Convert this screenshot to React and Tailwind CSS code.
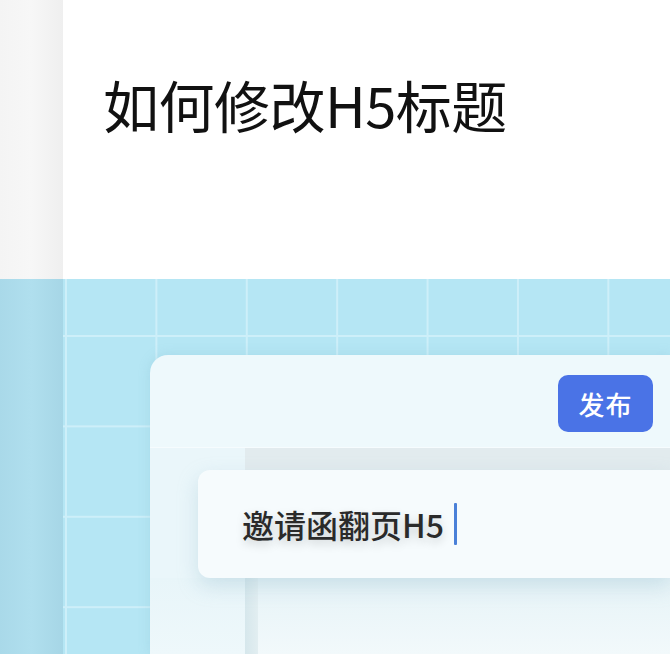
export default function App() {
  return (
    <div className="w-[670px] h-[654px] overflow-hidden flex flex-col bg-white font-['Noto_Sans_CJK_SC','Noto_Sans',sans-serif]">
      {/* top white area */}
      <div className="h-[279px] flex shrink-0">
        <div className="w-[63px] bg-gradient-to-r from-[#f4f4f4] via-[#f7f7f7] to-[#efefef]" />
        <div className="flex-1 pl-[40px] pt-[68px]">
          <h1 className="text-[56px] leading-[72px] text-[#111] font-normal tracking-[-0.5px]">如何修改H5标题</h1>
        </div>
      </div>

      {/* blue grid area */}
      <div className="flex-1 flex min-h-0">
        <div className="w-[63px] bg-gradient-to-r from-[#a9d9e9] via-[#b0dfee] to-[#a6d6e6]" />
        <div className="flex-1 flex flex-col pl-[87px] pt-[76px] bg-[#b5e6f4] bg-[image:linear-gradient(to_right,#cdeff9_2px,transparent_2px),linear-gradient(to_bottom,#cdeff9_2px,transparent_2px)] bg-[size:90.4px_90.4px] bg-[position:2px_56px]">
          <div className="flex-1 flex flex-col rounded-tl-[18px] bg-[#eef9fc] shadow-[0_0_12px_rgba(120,180,200,0.25)]">
            {/* header */}
            <div className="h-[93px] flex items-center justify-end pr-[17px] border-b border-[#f6fcfe]">
              <button className="w-[95px] h-[57px] mt-[4px] rounded-[10px] bg-[#4a73e6] text-white text-[26px] font-medium tracking-[1px]">
                发布
              </button>
            </div>

            {/* body */}
            <div className="flex-1 flex flex-col bg-[#eaf6fa]">
              <div className="h-[22px] flex">
                <div className="w-[95px]" />
                <div className="flex-1 bg-[#e2ebee]" />
              </div>
              <div className="ml-[48px] h-[108px] rounded-l-[12px] bg-[#f6fbfd] shadow-[0_8px_20px_rgba(150,190,205,0.35)] flex items-center pl-[44px] relative z-10">
                <span className="text-[32px] font-medium text-[#2a2a2a] [text-shadow:0_4px_10px_rgba(0,0,0,0.18)]">
                  邀请函翻页H5
                </span>
                <span className="ml-[10px] w-[3px] h-[42px] bg-[#4a80d8] rounded-[1px]" />
              </div>
              <div className="flex-1 flex">
                <div className="w-[95px] bg-gradient-to-b from-[#e8f5f9] to-[#eef8fb]" />
                <div className="w-[13px] bg-gradient-to-r from-[#d6e7ec] to-[#e2eef1]" />
                <div className="flex-1 bg-gradient-to-b from-[#e6f3f7] to-[#f2f9fb]" />
              </div>
            </div>
          </div>
        </div>
      </div>
    </div>
  );
}
